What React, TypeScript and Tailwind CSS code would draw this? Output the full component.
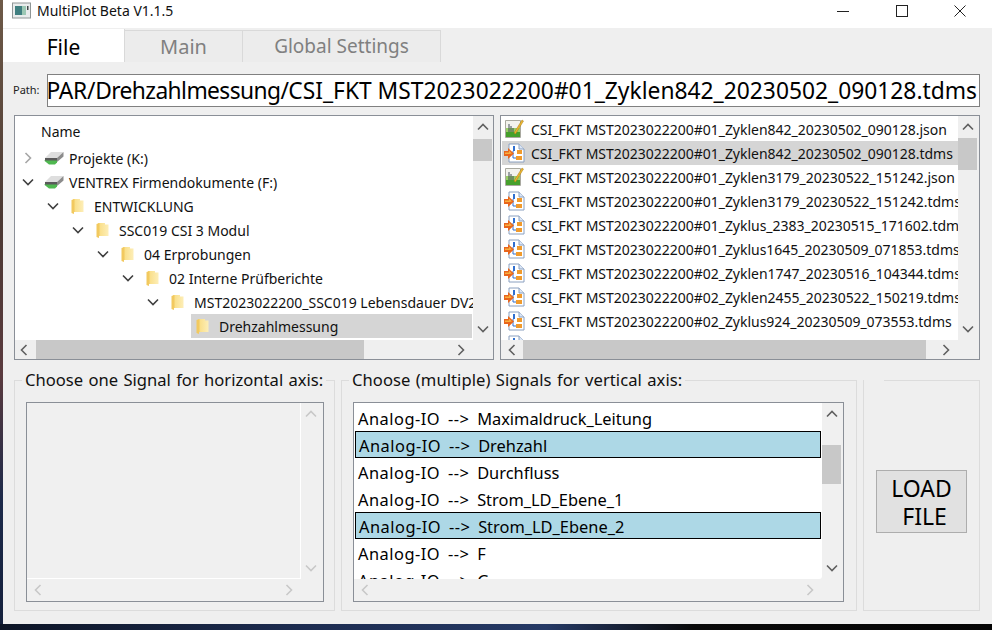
import React from "react";

const FONT = "font-['Noto_Sans','Open_Sans',sans-serif]";

function Chevron({ dir, color = "#606060", size = 12 }: { dir: "up" | "down" | "left" | "right"; color?: string; size?: number }) {
  const pts = {
    up: "1,8.5 6,3.5 11,8.5",
    down: "1,3.5 6,8.5 11,3.5",
    left: "8.5,1 3.5,6 8.5,11",
    right: "3.5,1 8.5,6 3.5,11",
  }[dir];
  return (
    <svg width={size} height={size} viewBox="0 0 12 12" className="shrink-0">
      <polyline points={pts} fill="none" stroke={color} strokeWidth="1.6" />
    </svg>
  );
}

function VScroll({ before, thumb, color = "#606060", thumbOn = true }: { before: number; thumb: number; color?: string; thumbOn?: boolean }) {
  return (
    <div className="w-[19px] shrink-0 flex flex-col items-stretch">
      <div className="h-[22px] flex items-center justify-center shrink-0">
        <Chevron dir="up" color={color} />
      </div>
      {thumbOn && <div style={{ height: before }} />}
      {thumbOn && <div className="bg-[#c8c8c8]" style={{ height: thumb }} />}
      <div className="flex-1" />
      <div className="h-[22px] flex items-center justify-center shrink-0">
        <Chevron dir="down" color={color} />
      </div>
    </div>
  );
}

function HScroll({ lw = 20, before, thumb, h = 19, gap, left = "#606060", right = "#606060" }: { lw?: number; before: number; thumb: number; h?: number; gap: number; left?: string; right?: string }) {
  return (
    <div className="flex items-stretch shrink-0" style={{ height: h }}>
      <div className="flex items-center justify-center shrink-0" style={{ width: lw }}>
        <Chevron dir="left" color={left} />
      </div>
      <div style={{ width: before }} />
      {thumb > 0 && <div className="bg-[#c8c8c8]" style={{ width: thumb }} />}
      <div className="flex-1" />
      <div className="w-[24px] flex items-center justify-center shrink-0">
        <Chevron dir="right" color={right} />
      </div>
      <div className="shrink-0" style={{ width: gap }} />
    </div>
  );
}

function DriveIcon() {
  return (
    <svg width="22" height="16" viewBox="0 0 22 16" className="shrink-0">
      <path d="M2 8 L8 2 L20.5 2 L14 8 Z" fill="#dedede" />
      <path d="M14 8 L20.5 2 L20.5 6.5 L14 12 Z" fill="#8c8c8c" />
      <path d="M2 8 L14 8 L14 11 L2 11 Z" fill="#5a5a5a" />
      <path d="M1 10.5 L14 10.5 L14 12.5 L12 14.5 L6 14.5 Z" fill="#4fb850" />
    </svg>
  );
}

function FolderIcon() {
  return (
    <svg width="13" height="17" viewBox="0 0 13 17" className="shrink-0">
      <defs>
        <linearGradient id="fg" x1="0" y1="0" x2="1" y2="0">
          <stop offset="0" stopColor="#f9dc80" />
          <stop offset="1" stopColor="#fdeeb8" />
        </linearGradient>
      </defs>
      <path d="M2 1 H9 V2.5 H12.5 V14 H2 Z" fill="url(#fg)" />
      <path d="M0.5 2 L3.5 1 V14 H3 V16 L0.5 15 Z" fill="#f2c95f" />
    </svg>
  );
}

function JsonIcon() {
  return (
    <svg width="20" height="20" viewBox="0 0 20 20" className="shrink-0">
      <path d="M1.5 1.5 H16.5 V18.5 H1.5 Z" fill="#f3f3ee" stroke="#a9a9a0" />
      <path d="M2 9 H16 V18 H2 Z" fill="#9ad066" />
      <path d="M2 13 H16 V18 H2 Z" fill="#45a02c" />
      <path d="M5 5 V13 M7 7 V13 M9 9 V13" stroke="#45505a" strokeWidth="1" />
      <path d="M10 14 L18 1 L19.5 2 L11.5 15 Z" fill="#edb72e" stroke="#a77a18" strokeWidth="0.5" />
    </svg>
  );
}

function TdmsIcon() {
  return (
    <svg width="21" height="20" viewBox="0 0 21 20" className="shrink-0">
      <path d="M5 1 H15 L20 6 V19 H5 Z" fill="#fff" stroke="#8aa0c0" />
      <path d="M15 1 V6 H20" fill="#dbe6f5" stroke="#8aa0c0" />
      <rect x="9" y="3" width="2" height="5" fill="#2f6fd0" />
      <rect x="13" y="7" width="5" height="4" fill="#f09a2c" />
      <rect x="12" y="13" width="6" height="4" fill="#f09a2c" />
      <path d="M9 8 V15 H12" fill="none" stroke="#2f6fd0" />
      <path d="M0 8 H4 V5 L10 10.5 L4 16 V13 H0 Z" fill="#e8651c" />
      <path d="M1 9.5 H5 V7.5 L8 10.5 L5 11 H1 Z" fill="#f8b040" />
    </svg>
  );
}

const tree = [
  { l: 0, t: "Projekte (K:)", a: "right", drive: true },
  { l: 0, t: "VENTREX Firmendokumente (F:)", a: "down", drive: true },
  { l: 1, t: "ENTWICKLUNG", a: "down" },
  { l: 2, t: "SSC019 CSI 3 Modul", a: "down" },
  { l: 3, t: "04 Erprobungen", a: "down" },
  { l: 4, t: "02 Interne Prüfberichte", a: "down" },
  { l: 5, t: "MST2023022200_SSC019 Lebensdauer DV2", a: "down" },
  { l: 6, t: "Drehzahlmessung", a: "", sel: true },
];

const files = [
  "CSI_FKT MST2023022200#01_Zyklen842_20230502_090128.json",
  "CSI_FKT MST2023022200#01_Zyklen842_20230502_090128.tdms",
  "CSI_FKT MST2023022200#01_Zyklen3179_20230522_151242.json",
  "CSI_FKT MST2023022200#01_Zyklen3179_20230522_151242.tdms",
  "CSI_FKT MST2023022200#01_Zyklus_2383_20230515_171602.tdms",
  "CSI_FKT MST2023022200#01_Zyklus1645_20230509_071853.tdms",
  "CSI_FKT MST2023022200#02_Zyklen1747_20230516_104344.tdms",
  "CSI_FKT MST2023022200#02_Zyklen2455_20230522_150219.tdms",
  "CSI_FKT MST2023022200#02_Zyklus924_20230509_073553.tdms",
  "",
];

const signals = [
  { t: "Maximaldruck_Leitung" },
  { t: "Drehzahl", sel: true },
  { t: "Durchfluss" },
  { t: "Strom_LD_Ebene_1" },
  { t: "Strom_LD_Ebene_2", sel: true },
  { t: "F" },
  { t: "G" },
];

export default function App() {
  return (
    <div className={`${FONT} w-[992px] h-[630px] overflow-hidden flex flex-col bg-[linear-gradient(90deg,#0d1526_0%,#1d2c50_30%,#263a66_55%,#0a0a0a_70%,#050505_100%)] text-black`}>
      <div className="flex h-[624px] shrink-0">
        <div className="w-[3px] shrink-0 bg-[linear-gradient(180deg,#6e5a48_0%,#4d3a34_35%,#5a3a3e_60%,#1d2a4a_80%,#14203c_100%)]" />
        <div className="flex-1 flex flex-col bg-[#efefef] min-w-0">
          {/* title bar */}
          <div className="h-[28px] bg-white flex items-center shrink-0 pb-[7px] pt-[1px]">
            <svg width="20" height="18" viewBox="0 0 20 18" className="ml-[9px] shrink-0">
              <rect x="0.5" y="1" width="18" height="15" fill="#e9ecec" stroke="#8f9696" />
              <rect x="3" y="4" width="7" height="9" fill="#3f7f80" />
              <rect x="10" y="4" width="4" height="9" fill="#9cc8b4" />
              <rect x="15" y="4" width="1.5" height="4" fill="#404848" />
            </svg>
            <span className="ml-[5px] text-[14px] leading-[20px] text-[#111] whitespace-nowrap">MultiPlot Beta V1.1.5</span>
            <div className="flex-1" />
            <svg width="12" height="12" viewBox="0 0 12 12" className="shrink-0 mt-[-1px]"><path d="M0 6.5 H12" stroke="#222" /></svg>
            <svg width="12" height="12" viewBox="0 0 12 12" className="shrink-0 ml-[47px] mt-[-1px]"><rect x="0.5" y="0.5" width="11" height="11" fill="none" stroke="#222" /></svg>
            <svg width="12" height="12" viewBox="0 0 12 12" className="shrink-0 ml-[46px] mr-[26px] mt-[-1px]"><path d="M0.5 0.5 L11.5 11.5 M11.5 0.5 L0.5 11.5" stroke="#222" /></svg>
          </div>
          {/* tabs */}
          <div className="h-[34px] pt-[1px] flex items-end shrink-0">
            <div className="w-[122px] h-[33px] pt-[3px] bg-white flex items-center justify-center text-[21px] leading-none border-r border-[#d9d9d9]">File</div>
            <div className="w-[118px] h-[32px] bg-[#ececec] border-t border-r border-[#d9d9d9] flex items-center justify-center text-[20px] text-[#808080]">Main</div>
            <div className="w-[198px] h-[32px] bg-[#ececec] border-t border-r border-[#d9d9d9] flex items-center justify-center text-[19px] text-[#808080]">Global Settings</div>
          </div>
          <div className="flex-1 pl-[11px] pr-[12px] flex flex-col min-h-0">
            {/* path */}
            <div className="flex items-center mt-[12px] h-[33px] shrink-0">
              <span className="w-[33px] -ml-px mr-px text-[11px] text-[#222]">Path:</span>
              <div className="flex-1 h-[33px] bg-white border border-[#808080] flex justify-end items-center overflow-hidden pr-[2px]">
                <span className="text-[22.8px] leading-[30px] whitespace-nowrap shrink-0">
                  <span className="tracking-[-0.3px]">PAR/</span>
                  <span className="tracking-[-0.6px]">Drehzahlmessung/</span>CSI_FKT MST2023022200#01_Zyklen842_20230502_090128.tdms
                </span>
              </div>
            </div>
            {/* browsers */}
            <div className="flex gap-[6px] mt-[8px] h-[245px] shrink-0">
              <div className="w-[480px] border border-[#8a8f97] flex flex-col min-w-0">
                <div className="flex flex-1 min-h-0 pr-px">
                  <div className="flex-1 min-w-0 bg-white overflow-hidden flex flex-col text-[14px]">
                    <div className="h-[30px] shrink-0 pl-[26px] flex items-center text-[#111]">Name</div>
                    {tree.map((r) => (
                      <div key={r.t} className="h-[24px] shrink-0 flex items-center whitespace-nowrap overflow-hidden" style={{ paddingLeft: r.l * 25 }}>
                        <div className="w-[26px] flex justify-center shrink-0">
                          {r.a === "right" && <Chevron dir="right" color="#a6a6a6" />}
                          {r.a === "down" && <Chevron dir="down" color="#404040" />}
                        </div>
                        <div className={`flex items-center h-[24px] flex-1 min-w-0 mr-px ${r.sel ? "bg-[#d5d5d5]" : ""}`}>
                          {r.drive ? (
                            <div className="w-[28px] shrink-0 pl-[2px]"><DriveIcon /></div>
                          ) : (
                            <div className="w-[28px] shrink-0 pl-[5px]"><FolderIcon /></div>
                          )}
                          <span className="text-[#111]">{r.t}</span>
                        </div>
                      </div>
                    ))}
                  </div>
                  <VScroll before={1} thumb={22} />
                </div>
                <HScroll lw={18} before={3} thumb={328} gap={20} />
              </div>
              <div className="flex-1 border border-[#8a8f97] flex flex-col min-w-0">
                <div className="flex flex-1 min-h-0 pr-[2px]">
                  <div className="flex-1 min-w-0 bg-white overflow-hidden flex flex-col text-[14px] pl-[1px] pt-[1px]">
                    {files.map((f, i) => (
                      <div key={i} className={`h-[24px] shrink-0 flex items-center whitespace-nowrap overflow-hidden ${i === 1 ? "bg-[#d5d5d5]" : ""}`}>
                        <div className="w-[29px] pl-[2px] shrink-0">{f.endsWith("json") ? <JsonIcon /> : <TdmsIcon />}</div>
                        <span className="text-[#111] tracking-[-0.02px]">{f}</span>
                      </div>
                    ))}
                  </div>
                  <VScroll before={0} thumb={32} />
                </div>
                <HScroll lw={22} before={0} thumb={403} gap={21} />
              </div>
            </div>
            {/* groups */}
            <div className="flex gap-[6px] mt-[10px] h-[241px] shrink-0">
              <fieldset className="w-[321px] h-[241px] border border-[#dcdcdc]">
                <legend className="ml-[7px] px-[3px] text-[16.6px] [word-spacing:1px] leading-[20px] text-[#111] whitespace-nowrap">Choose one Signal for horizontal axis:</legend>
                <div className="ml-[11px] mt-[12px] w-[298px] h-[200px] border border-[#8a8f97] flex flex-col bg-[#f0f0f0]">
                  <div className="flex flex-1 min-h-0 pr-[3px]">
                    <div className="flex-1 border-r border-b border-white" />
                    <VScroll before={0} thumb={0} thumbOn={false} color="#c8c8c8" />
                  </div>
                  <HScroll lw={22} before={0} thumb={0} h={22} gap={22} left="#c8c8c8" right="#c8c8c8" />
                </div>
              </fieldset>
              <fieldset className="w-[516px] h-[241px] border border-[#dcdcdc]">
                <legend className="ml-[7px] px-[3px] text-[16.6px] [word-spacing:1px] tracking-[0.05px] leading-[20px] text-[#111] whitespace-nowrap">Choose (multiple) Signals for vertical axis:</legend>
                <div className="ml-[11px] mt-[12px] w-[491px] h-[200px] border border-[#8a8f97] flex flex-col bg-[#f0f0f0]">
                  <div className="flex flex-1 min-h-0 pr-[2px]">
                    <div className="flex-1 min-w-0 bg-white overflow-hidden rounded-br-[3px] pl-[1px] pr-[1px] pt-[1px] text-[16.4px] flex flex-col">
                      {signals.map((s) => (
                        <div key={s.t} className={`h-[27px] shrink-0 flex items-center pl-[3px] pt-[3px] whitespace-pre ${s.sel ? "bg-[#add8e6] border border-black" : ""}`}>
                          <span className="tracking-[0.5px] [word-spacing:3px]">{"Analog-IO --> "}</span>
                          <span>{s.t}</span>
                        </div>
                      ))}
                    </div>
                    <VScroll before={20} thumb={39} />
                  </div>
                  <HScroll lw={22} before={0} thumb={0} h={22} gap={21} left="#c8c8c8" right="#c8c8c8" />
                </div>
              </fieldset>
              <fieldset className="w-[117px] h-[241px] border border-[#dcdcdc] flex items-center justify-center pt-[2px]">
                <legend className="w-[20px] h-[20px]" />
                <div className="w-[91px] h-[63px] pt-[1px] bg-[#e1e1e1] border border-[#adadad] flex items-center justify-center text-center text-[23px] leading-[28px]">
                  <div>
                    <div>LOAD</div>
                    <div className="pl-[6px]">FILE</div>
                  </div>
                </div>
              </fieldset>
            </div>
          </div>
        </div>
      </div>
    </div>
  );
}
